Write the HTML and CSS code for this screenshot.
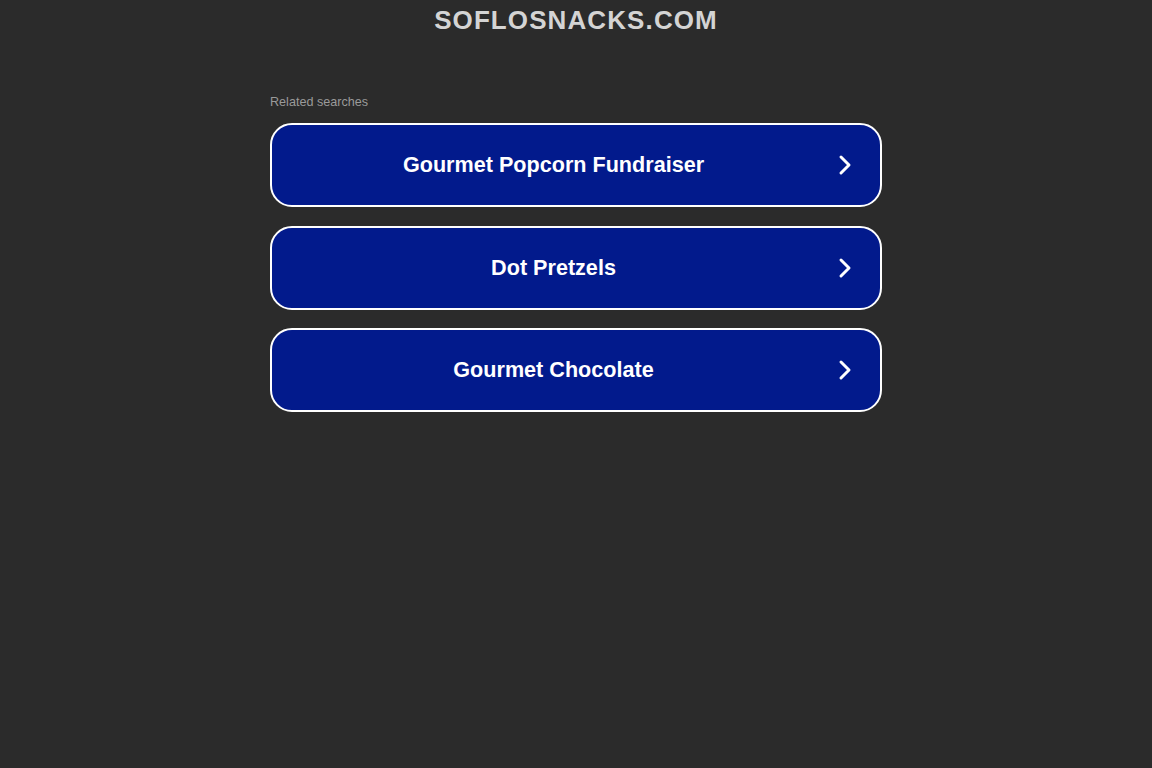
FILE: index.html
```html
<!DOCTYPE html>
<html lang="en">

<head>
  <meta charset="UTF-8">
  <meta name="viewport" content="width=device-width, initial-scale=1">
  <title>soflosnacks.com</title>
  <link rel="stylesheet" href="styles.css">
</head>

<body>

  <div class="header">
    <h1 class="domain">soflosnacks.com</h1>
  </div>

  <div class="container">
    <p class="related">Related searches</p>

    <div class="links">
      <a class="link" href="#">
        <span class="link-text">Gourmet Popcorn Fundraiser</span>
        <svg class="chevron" viewBox="0 0 16 24" width="16" height="24">
          <path d="M4 4 L12 12 L4 20" fill="none" stroke="#fff" stroke-width="3" stroke-linecap="round" stroke-linejoin="round"/>
        </svg>
      </a>
      <a class="link" href="#">
        <span class="link-text">Dot Pretzels</span>
        <svg class="chevron" viewBox="0 0 16 24" width="16" height="24">
          <path d="M4 4 L12 12 L4 20" fill="none" stroke="#fff" stroke-width="3" stroke-linecap="round" stroke-linejoin="round"/>
        </svg>
      </a>
      <a class="link" href="#">
        <span class="link-text">Gourmet Chocolate</span>
        <svg class="chevron" viewBox="0 0 16 24" width="16" height="24">
          <path d="M4 4 L12 12 L4 20" fill="none" stroke="#fff" stroke-width="3" stroke-linecap="round" stroke-linejoin="round"/>
        </svg>
      </a>
    </div>
  </div>

</body>

</html>
```

FILE: styles.css
```css
body {
  margin: 0;
  padding: 0;
  background: #2b2b2b;
  font-family: "Liberation Sans", Arial, sans-serif;
}

.header {
  text-align: center;
  padding-top: 4px;
}

.domain {
  margin: 0;
  font-size: 26px;
  line-height: 32px;
  font-weight: bold;
  letter-spacing: 1.1px;
  text-transform: uppercase;
  color: #d4d4d4;
}

.container {
  width: 612px;
  margin: 0 auto;
  padding-top: 58px;
}

.related {
  margin: 0 0 13px;
  font-size: 12.6px;
  line-height: 16px;
  color: #9a9a9a;
}

.links {
  display: flex;
  flex-direction: column;
  gap: 18.5px;
}

.link {
  display: flex;
  align-items: center;
  height: 80px;
  background: #021a8c;
  border: 2px solid #fff;
  border-radius: 22px;
  color: #fff;
  text-decoration: none;
}

.link-text {
  flex: 1;
  text-align: center;
  font-size: 21.6px;
  font-weight: bold;
}

.chevron {
  margin-right: 27px;
  margin-left: 2px;
}
```
